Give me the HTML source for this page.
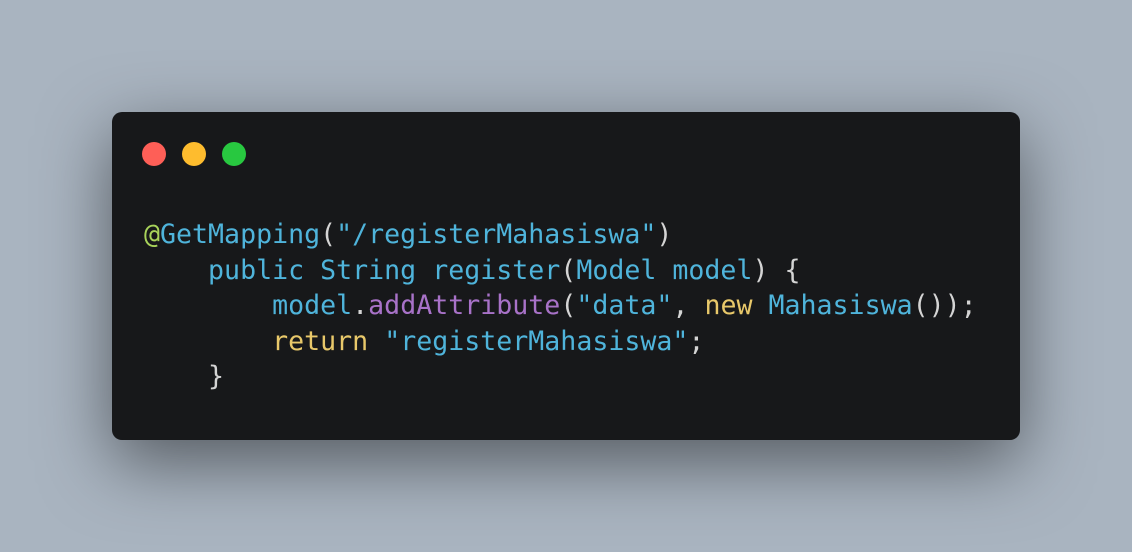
<!DOCTYPE html>
<html><head><style>
html,body{margin:0;padding:0}
body{width:1132px;height:552px;background:#a9b4c0;position:relative;overflow:hidden;}
.win{position:absolute;left:112px;top:112px;width:908px;height:328px;background:#17181a;border-radius:10px;box-shadow:0 22px 70px rgba(0,0,0,0.5);}
.d{position:absolute;top:30px;width:24px;height:24px;border-radius:50%}
pre{position:absolute;left:32px;top:105px;margin:0;font-family:"DejaVu Sans Mono","Liberation Mono",monospace;font-size:26.6px;line-height:35.6px;color:#d4d4d4;}
.b{color:#4fb4db}.y{color:#e8c86a}.p{color:#a872c8}.g{color:#a8d35a}
</style></head><body>
<div class="win">
<div class="d" style="left:30px;background:#fe5f57"></div>
<div class="d" style="left:70px;background:#febc2e"></div>
<div class="d" style="left:110px;background:#28c840"></div>
<pre><span class="g">@</span><span class="b">GetMapping</span>(<span class="b">"/registerMahasiswa"</span>)
    <span class="b">public String register</span>(<span class="b">Model model</span>) {
        <span class="b">model</span>.<span class="p">addAttribute</span>(<span class="b">"data"</span>, <span class="y">new</span> <span class="b">Mahasiswa</span>());
        <span class="y">return</span> <span class="b">"registerMahasiswa"</span>;
    }</pre>
</div>
</body></html>
